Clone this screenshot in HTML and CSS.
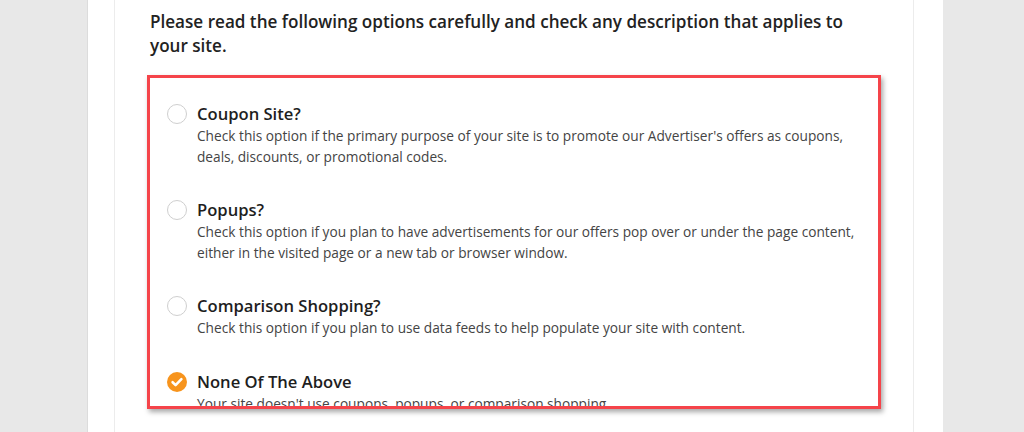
FILE: index.html
```html
<!DOCTYPE html>
<html>
<head>
<meta charset="utf-8">
<link rel="stylesheet" href="styles.css">
</head>
<body>
<div class="page">
  <div class="card">
    <h2 class="lead">Please read the following options carefully and check any description that applies to your site.</h2>
    <div class="highlight">
      <div class="option">
        <span class="radio"></span>
        <div class="text">
          <div class="title">Coupon Site?</div>
          <div class="desc">Check this option if the primary purpose of your site is to promote our Advertiser's offers as coupons, deals, discounts, or promotional codes.</div>
        </div>
      </div>
      <div class="option">
        <span class="radio"></span>
        <div class="text">
          <div class="title">Popups?</div>
          <div class="desc">Check this option if you plan to have advertisements for our offers pop over or under the page content, either in the visited page or a new tab or browser window.</div>
        </div>
      </div>
      <div class="option">
        <span class="radio"></span>
        <div class="text">
          <div class="title">Comparison Shopping?</div>
          <div class="desc">Check this option if you plan to use data feeds to help populate your site with content.</div>
        </div>
      </div>
      <div class="option">
        <span class="radio checked">
          <svg viewBox="0 0 20 20" width="20" height="20"><path d="M5.6 10.2 L8.6 13.1 L14.4 7.2" fill="none" stroke="#fff" stroke-width="2.6" stroke-linecap="round" stroke-linejoin="round"/></svg>
        </span>
        <div class="text">
          <div class="title">None Of The Above</div>
          <div class="desc">Your site doesn't use coupons, popups, or comparison shopping.</div>
        </div>
      </div>
    </div>
  </div>
</div>
</body>
</html>
```

FILE: styles.css
```css
html, body {
  margin: 0;
  padding: 0;
}
body {
  background: #e8e8e8;
  height: 432px;
  overflow: hidden;
  font-family: "Open Sans", "Noto Sans", sans-serif;
}
.page {
  margin-left: 87px;
  width: 856px;
  height: 432px;
  background: #fff;
  border-left: 1px solid #dcdcdc;
  box-sizing: border-box;
  padding-left: 26px;
}
.card {
  width: 800px;
  height: 432px;
  box-sizing: border-box;
  border-left: 1px solid #ececec;
  border-right: 1px solid #ececec;
  padding: 10px 32px 0 32px;
}
.lead {
  margin: 0 0 17px 3px;
  font-size: 17.1px;
  line-height: 24px;
  font-weight: 600;
  color: #222;
}
.highlight {
  height: 334px;
  box-sizing: border-box;
  border: 3px solid #f5444a;
  box-shadow: 2px 3px 5px rgba(0, 0, 0, 0.35);
  overflow: hidden;
  padding: 25px 0 0 17px;
}
.option {
  display: flex;
  gap: 10px;
  margin-bottom: 32px;
}
.option:nth-child(3) {
  margin-bottom: 33px;
}
.radio {
  flex: none;
  width: 20px;
  height: 20px;
  margin-top: 1px;
  box-sizing: border-box;
  border: 1px solid #cfcfcf;
  border-radius: 50%;
  background: #fff;
}
.radio.checked {
  border: none;
  background: #f7941d;
}
.radio svg {
  display: block;
}
.title {
  font-size: 16.6px;
  line-height: 22px;
  font-weight: 600;
  color: #1e1e1e;
}
.desc {
  font-size: 13.7px;
  line-height: 21px;
  color: #444;
  max-width: 670px;
}
.option:nth-child(2) .title {
  margin-bottom: 0;
}
```
